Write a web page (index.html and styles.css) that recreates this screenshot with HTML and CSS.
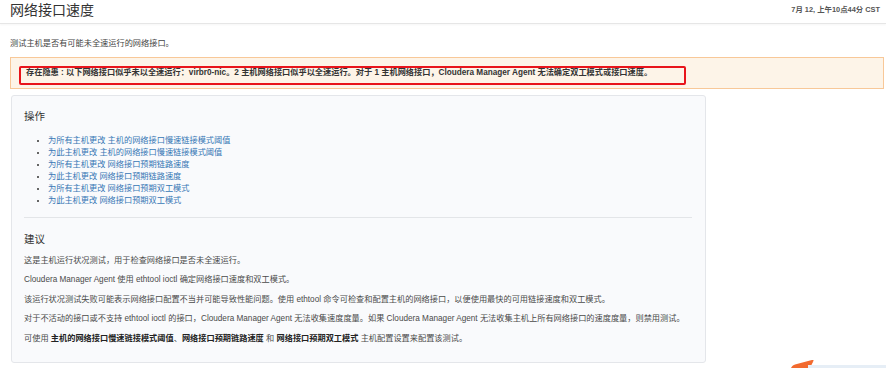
FILE: index.html
```html
<!DOCTYPE html>
<html lang="zh-CN">
<head>
<meta charset="utf-8">
<title>网络接口速度</title>
<link rel="stylesheet" href="styles.css">
</head>
<body>
<header class="page-header">
  <h1 class="title">网络接口速度</h1>
  <span class="timestamp">7月 12, 上午10点44分 CST</span>
</header>
<p class="desc">测试主机是否有可能未全速运行的网络接口。</p>
<div class="alert">
  <span class="alert-text">存在隐患 : 以下网络接口似乎未以全速运行：virbr0-nic。2 主机网络接口似乎以全速运行。对于 1 主机网络接口，Cloudera Manager Agent 无法确定双工模式或接口速度。</span>
  <div class="annotation"></div>
</div>
<section class="card">
  <h4 class="card-title">操作</h4>
  <ul class="actions">
    <li><a href="#">为所有主机更改 主机的网络接口慢速链接模式阈值</a></li>
    <li><a href="#">为此主机更改 主机的网络接口慢速链接模式阈值</a></li>
    <li><a href="#">为所有主机更改 网络接口预期链路速度</a></li>
    <li><a href="#">为此主机更改 网络接口预期链路速度</a></li>
    <li><a href="#">为所有主机更改 网络接口预期双工模式</a></li>
    <li><a href="#">为此主机更改 网络接口预期双工模式</a></li>
  </ul>
  <hr class="divider">
  <h4 class="card-title">建议</h4>
  <p class="para first">这是主机运行状况测试，用于检查网络接口是否未全速运行。</p>
  <p class="para">Cloudera Manager Agent 使用 ethtool ioctl 确定网络接口速度和双工模式。</p>
  <p class="para">该运行状况测试失败可能表示网络接口配置不当并可能导致性能问题。使用 ethtool 命令可检查和配置主机的网络接口，以便使用最快的可用链接速度和双工模式。</p>
  <p class="para">对于不活动的接口或不支持 ethtool ioctl 的接口，Cloudera Manager Agent 无法收集速度度量。如果 Cloudera Manager Agent 无法收集主机上所有网络接口的速度度量，则禁用测试。</p>
  <p class="para">可使用 <b>主机的网络接口慢速链接模式阈值</b>、<b>网络接口预期链路速度</b> 和 <b>网络接口预期双工模式</b> 主机配置设置来配置该测试。</p>
</section>
<div class="corner-arrow"></div>
<div class="corner-line"></div>
</body>
</html>
```
FILE: styles.css
```css
html, body {
  margin: 0;
  padding: 0;
  background: #ffffff;
}
body {
  font-family: "Liberation Sans", "Noto Sans CJK SC", sans-serif;
  font-size: 8.2px;
  color: #333333;
  position: relative;
  width: 886px;
  height: 368px;
  overflow: hidden;
}
.page-header {
  height: 23px;
  border-bottom: 1px solid #e6e6e6;
  box-shadow: 0 1px 2px rgba(0,0,0,0.04);
  display: flex;
  align-items: flex-start;
  justify-content: space-between;
  padding: 0 6px 0 10px;
}
.title {
  margin: 0;
  font-size: 14px;
  font-weight: normal;
  line-height: 20px;
  color: #333;
}
.timestamp {
  font-size: 7.4px;
  font-weight: bold;
  color: #555;
  line-height: 20px;
}
.desc {
  margin: 14px 0 0 10px;
  line-height: 12px;
  color: #444;
}
.alert {
  position: relative;
  margin: 7px 2px 0 10px;
  padding: 9px 15px;
  background: #fdf4e8;
  border: 1px solid #f8c898;
  line-height: 12px;
  font-weight: bold;
  color: #333;
}
.alert-text {
  white-space: nowrap;
}
.annotation {
  position: absolute;
  left: 8px;
  top: 8px;
  width: 663px;
  height: 15px;
  border: 2px solid #e8141b;
  border-radius: 2px;
}
.card {
  margin: 6px 0 0 11px;
  width: 668px;
  padding: 13px 13px 17px 12px;
  background: #f9fafc;
  border: 1px solid #e4e6ea;
  border-radius: 3px;
}
.card-title {
  margin: 0;
  font-size: 10.5px;
  font-weight: normal;
  line-height: 14px;
  color: #333;
}
.actions {
  margin: 11.5px 0 0 0;
  padding-left: 24px;
  line-height: 12px;
  list-style: disc;
}
.actions a {
  color: #3777b5;
  text-decoration: none;
}
.divider {
  margin: 10px 0 14px 0;
  border: 0;
  border-top: 1px solid #e3e5e8;
  height: 0;
}
.para {
  margin: 7.5px 0 0 0;
  line-height: 12px;
  color: #4a4a4a;
  white-space: nowrap;
}
.para.first {
  margin-top: 9px;
}
.para b {
  color: #222;
}
.corner-arrow {
  position: absolute;
  left: 792px;
  top: 362px;
  width: 18px;
  height: 10px;
  background: #f26a2e;
  transform: skewX(-40deg) rotate(-18deg);
  border-radius: 2px;
}
.corner-line {
  position: absolute;
  left: 808px;
  top: 365px;
  width: 78px;
  height: 3px;
  background: #e6eef6;
}
```
